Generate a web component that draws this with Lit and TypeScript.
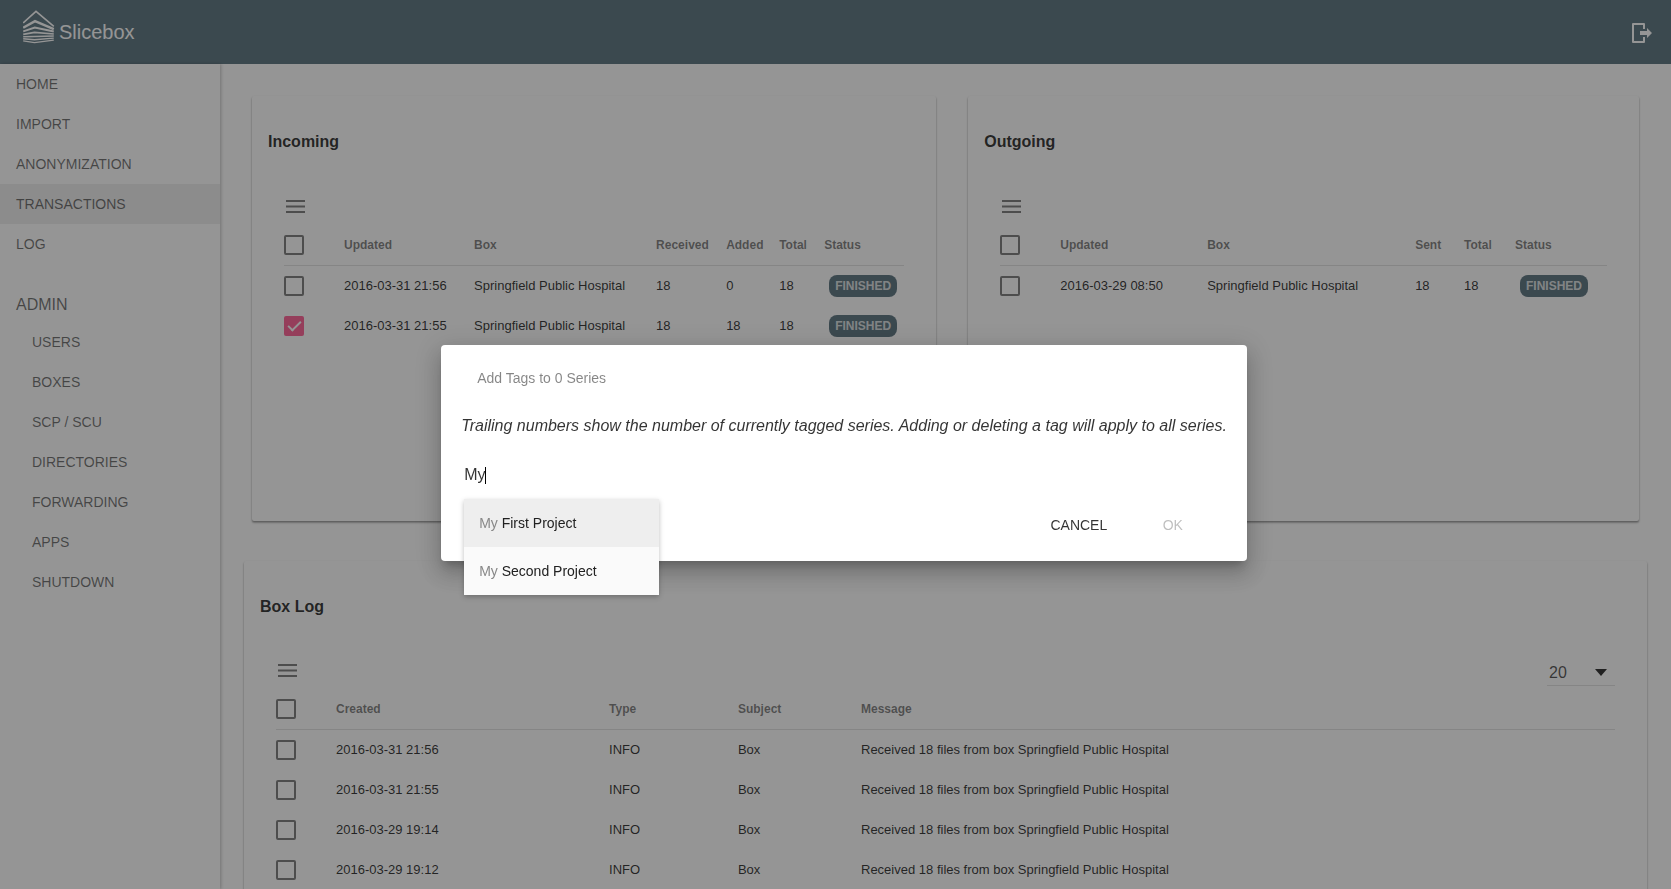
import { LitElement, html, css, svg } from "lit";
import { customElement, property } from "lit/decorators.js";
import { classMap } from "lit/directives/class-map.js";

type Cell = string;
interface Column {
  label: string;
  width?: number;
}

const menuIcon = html`<svg class="menu-icon" viewBox="0 0 19 13" aria-hidden="true">
  ${[0, 5.5, 11].map((y) => svg`<rect x="0" y=${y} width="19" height="2"></rect>`)}
</svg>`;

@customElement("data-card")
export class DataCard extends LitElement {
  @property() heading = "";
  @property({ type: Boolean }) paged = false;
  @property({ attribute: false }) columns: Column[] = [];
  @property({ attribute: false }) rows: Cell[][] = [];
  @property({ attribute: false }) selected: number[] = [];

  static styles = css`
    :host {
      display: block;
      box-sizing: border-box;
      padding: 33px 32px 0;
      background: #fff;
      border-radius: 2px;
      box-shadow: 0 2px 2px 0 rgba(0, 0, 0, 0.24), 0 1px 2px 0 rgba(0, 0, 0, 0.28);
      min-width: 0;
    }
    h2 {
      margin: 0 0 0 -16px;
      font-size: 16px;
      line-height: 26px;
      font-weight: 700;
    }
    .toolbar {
      display: flex;
      justify-content: space-between;
      align-items: center;
      height: 36px;
      margin-top: 33px;
      padding-bottom: 1px;
    }
    .toolbar.paged {
      height: 35px;
    }
    .menu {
      border: 0;
      background: none;
      padding: 0 2px;
      display: flex;
      color: rgba(0, 0, 0, 0.54);
    }
    .menu-icon {
      width: 19px;
      height: 13px;
      fill: currentColor;
    }
    .pager {
      position: relative;
      display: flex;
      width: 68px;
      border-bottom: 1px solid rgba(0, 0, 0, 0.12);
      margin-top: 4px;
    }
    .pager::after {
      content: "";
      align-self: center;
      margin: 0 8px 0 -20px;
      border: solid transparent;
      border-width: 7px 6px 0;
      border-top-color: rgba(0, 0, 0, 0.87);
      pointer-events: none;
    }
    select {
      appearance: none;
      border: 0;
      background: none;
      width: 100%;
      flex: none;
      padding: 0 2px;
      height: 26px;
      font: 16px "Liberation Sans", Arial, sans-serif;
      color: rgba(0, 0, 0, 0.73);
    }
    table {
      width: 100%;
      table-layout: fixed;
      border-collapse: separate;
      border-spacing: 0;
      font-size: 13px;
    }
    .pick-col {
      width: 60px;
    }
    th {
      height: 40px;
      padding: 0;
      text-align: left;
      font-size: 12px;
      font-weight: 700;
      color: rgba(0, 0, 0, 0.54);
      border-bottom: 1px solid rgba(0, 0, 0, 0.12);
      white-space: nowrap;
    }
    td {
      box-sizing: border-box;
      height: 40px;
      padding: 0;
      white-space: nowrap;
    }
    td.text {
      padding-bottom: 2px;
    }
    input {
      appearance: none;
      display: block;
      box-sizing: border-box;
      width: 20px;
      height: 20px;
      margin: 0;
      border: 2px solid rgba(0, 0, 0, 0.54);
      border-radius: 2px;
    }
    input:checked {
      border-color: transparent;
      background: rgba(255, 64, 129, 0.87) border-box;
    }
    input:checked::after {
      content: "";
      display: block;
      box-sizing: border-box;
      width: 7px;
      height: 13px;
      margin: 0 0 0 5px;
      border: solid #fff;
      border-width: 0 2px 2px 0;
      transform: rotate(45deg);
    }
    .badge {
      display: inline-block;
      margin-left: 5px;
      padding: 0 6px;
      border-radius: 8px;
      background: #546e7a;
      color: rgba(255, 255, 255, 0.8);
      font-size: 12px;
      line-height: 22px;
      font-weight: 700;
    }
  `;

  private cell(text: Cell) {
    return text === "FINISHED"
      ? html`<td><span class="badge">${text}</span></td>`
      : html`<td class="text">${text}</td>`;
  }

  render() {
    return html`
      <h2>${this.heading}</h2>
      <div class=${classMap({ toolbar: true, paged: this.paged })}>
        <button class="menu" aria-label="Actions">${menuIcon}</button>
        ${this.paged
          ? html`<div class="pager">
              <select aria-label="Rows per page">
                <option>20</option>
                <option>50</option>
              </select>
            </div>`
          : ""}
      </div>
      <table>
        <colgroup>
          <col class="pick-col" />
          ${this.columns.map((c) =>
            c.width ? html`<col style="width:${c.width}%" />` : html`<col />`
          )}
        </colgroup>
        <thead>
          <tr>
            <th><input type="checkbox" aria-label="Select all" /></th>
            ${this.columns.map((c) => html`<th scope="col">${c.label}</th>`)}
          </tr>
        </thead>
        <tbody>
          ${this.rows.map(
            (row, i) => html`<tr>
              <td>
                <input
                  type="checkbox"
                  aria-label="Select row ${i + 1}"
                  ?checked=${this.selected.includes(i)}
                />
              </td>
              ${row.map((c) => this.cell(c))}
            </tr>`
          )}
        </tbody>
      </table>
    `;
  }
}

@customElement("tag-dialog")
export class TagDialog extends LitElement {
  static styles = css`
    :host {
      position: fixed;
      inset: 0;
      display: flex;
      align-items: center;
      justify-content: center;
      padding: 17px 0 0 17px;
      background: rgba(33, 33, 33, 0.48);
    }
    .dialog {
      box-sizing: border-box;
      padding: 24px 20px 18px;
      background: #fff;
      border-radius: 4px;
      box-shadow: 0 7px 8px -4px rgba(0, 0, 0, 0.2), 0 13px 19px 2px rgba(0, 0, 0, 0.14),
        0 5px 24px 4px rgba(0, 0, 0, 0.12);
    }
    h2 {
      margin: 0 16px;
      font-size: 14px;
      line-height: 18px;
      font-weight: 400;
      color: rgba(0, 0, 0, 0.48);
    }
    p {
      margin: 29px 0 28px;
      font-size: 16px;
      line-height: 20px;
      font-style: italic;
      color: rgba(0, 0, 0, 0.8);
    }
    .field {
      position: relative;
      display: flex;
      align-items: center;
      height: 22px;
      margin-left: 3px;
    }
    .field input {
      field-sizing: content;
      border: 0;
      outline: 0;
      padding: 0;
      background: none;
      caret-color: transparent;
      font: 16px "Liberation Sans", Arial, sans-serif;
      color: rgba(0, 0, 0, 0.8);
    }
    .caret {
      width: 1px;
      height: 17px;
      background: #000;
    }
    ul {
      position: absolute;
      left: 0;
      top: 35px;
      width: 195px;
      margin: 0;
      padding: 0;
      list-style: none;
      background: #fafafa;
      box-shadow: 0 2px 5px rgba(0, 0, 0, 0.26);
      font-size: 14px;
      line-height: 48px;
    }
    li {
      padding: 0 15px;
      color: #212121;
    }
    li[aria-selected="true"] {
      background: #eee;
    }
    .match {
      color: #888;
    }
    .actions {
      display: flex;
      justify-content: flex-end;
      gap: 6px;
      margin: 21px 10px 0 0;
    }
    .actions button {
      min-width: 88px;
      height: 36px;
      border: 0;
      padding: 0 6px;
      background: none;
      font: 14px "Liberation Sans", Arial, sans-serif;
      color: rgba(0, 0, 0, 0.8);
    }
    .actions button:disabled {
      color: rgba(0, 0, 0, 0.26);
    }
  `;

  render() {
    return html`
      <div class="dialog" role="dialog" aria-modal="true" aria-labelledby="title">
        <h2 id="title">Add Tags to 0 Series</h2>
        <p>
          Trailing numbers show the number of currently tagged series. Adding or deleting a tag
          will apply to all series.
        </p>
        <div class="field">
          <input type="text" size="2" value="My" aria-label="Tag name" />
          <span class="caret"></span>
          <ul role="listbox" aria-label="Matching tags">
            ${["First Project", "Second Project"].map(
              (name, i) => html`<li role="option" aria-selected=${i === 0}>
                <span class="match">My</span> ${name}
              </li>`
            )}
          </ul>
        </div>
        <div class="actions">
          <button>CANCEL</button>
          <button disabled>OK</button>
        </div>
      </div>
    `;
  }
}

const incoming: Column[] = [
  { label: "Updated", width: 20.97 },
  { label: "Box", width: 29.35 },
  { label: "Received", width: 11.29 },
  { label: "Added", width: 8.55 },
  { label: "Total", width: 7.26 },
  { label: "Status" },
];

const outgoing: Column[] = [
  { label: "Updated", width: 24.22 },
  { label: "Box", width: 34.27 },
  { label: "Sent", width: 8.07 },
  { label: "Total", width: 8.4 },
  { label: "Status" },
];

const log: Column[] = [
  { label: "Created", width: 20.39 },
  { label: "Type", width: 9.63 },
  { label: "Subject", width: 9.19 },
  { label: "Message" },
];

const hospital = "Springfield Public Hospital";
const logRows = ["2016-03-31 21:56", "2016-03-31 21:55", "2016-03-29 19:14", "2016-03-29 19:12"].map(
  (time) => [time, "INFO", "Box", `Received 18 files from box ${hospital}`]
);

@customElement("app-root")
export class AppRoot extends LitElement {
  static styles = css`
    :host {
      display: flex;
      flex-direction: column;
      height: 100vh;
      overflow: hidden;
      background: #fff;
      font-family: "Liberation Sans", Arial, sans-serif;
      color: rgba(0, 0, 0, 0.87);
    }
    header {
      display: flex;
      flex: none;
      justify-content: space-between;
      align-items: center;
      height: 64px;
      padding: 0 19px 0 23px;
      box-sizing: border-box;
      background: #546e7a;
      color: #fff;
    }
    .brand {
      display: flex;
      align-items: center;
      gap: 4px;
      font-size: 20px;
      line-height: 24px;
      color: inherit;
      text-decoration: none;
    }
    .logo {
      width: 32px;
      height: 34px;
      margin-bottom: 10px;
    }
    .logout {
      display: flex;
      border: 0;
      padding: 0;
      background: none;
      color: inherit;
    }
    .logout svg {
      width: 20px;
      height: 20px;
      margin-top: 2px;
    }
    .body {
      display: flex;
      flex: 1;
      min-height: 0;
    }
    nav {
      flex: none;
      width: 220px;
      background: #fff;
      box-shadow: 1px 0 3px rgba(0, 0, 0, 0.26);
      font-size: 14px;
    }
    nav a {
      display: block;
      padding: 0 16px;
      line-height: 40px;
      color: rgba(0, 0, 0, 0.6);
      text-decoration: none;
    }
    nav a.active {
      background: rgba(0, 0, 0, 0.07);
    }
    .group {
      padding: 31px 16px 7px;
      font-size: 16px;
      line-height: 20px;
      color: rgba(0, 0, 0, 0.6);
    }
    .sub a {
      padding-left: 32px;
    }
    main {
      flex: 1;
      min-width: 0;
      overflow: hidden;
      padding: 32px 24px 0;
    }
    .pair {
      display: grid;
      grid-template-columns: 101fr 99fr;
      gap: 32px;
      margin: 0 8px 40px;
    }
    .pair data-card {
      min-height: 425px;
    }
    .log {
      min-height: 440px;
    }
  `;

  render() {
    return html`
      <header>
        <a class="brand" href="#">
          <svg class="logo" viewBox="0 0 32 34" fill="none" stroke="#fff" aria-hidden="true">
            <path d="M0.2 12.9L13 1.3L30.8 16.4" stroke-width="1.6" />
            <path d="M0.2 17.8L12 11.2L30.8 19.2" stroke-width="2.4" />
            <path d="M0.2 21.4L11.8 17.6L30.8 21.6" stroke-width="2" />
            <path d="M0.2 24.4L11.5 22.4L30.8 24" stroke-width="1.7" />
            <path d="M0.2 26.7L11.5 26.5L30.8 26" stroke-width="1.4" />
            <path d="M0.2 28.8L11.5 29.7L30.8 28.1" stroke-width="1.4" />
            <path d="M0.2 30.9L11.5 32.6L30.8 30.1" stroke-width="1.4" />
          </svg>
          <span>Slicebox</span>
        </a>
        <button class="logout" aria-label="Log out">
          <svg viewBox="0 0 20 20" aria-hidden="true">
            <path
              d="M12 6V1H1V19H12V14"
              fill="none"
              stroke="currentColor"
              stroke-width="2"
              stroke-linejoin="round"
            />
            <path d="M8 8H15V5L20 10L15 15V12H8Z" fill="currentColor" />
          </svg>
        </button>
      </header>
      <div class="body">
        <nav>
          ${["HOME", "IMPORT", "ANONYMIZATION", "TRANSACTIONS", "LOG"].map(
            (item) =>
              html`<a href="#" class=${classMap({ active: item === "TRANSACTIONS" })}>${item}</a>`
          )}
          <div class="group">ADMIN</div>
          <div class="sub">
            ${["USERS", "BOXES", "SCP / SCU", "DIRECTORIES", "FORWARDING", "APPS", "SHUTDOWN"].map(
              (item) => html`<a href="#">${item}</a>`
            )}
          </div>
        </nav>
        <main>
          <div class="pair">
            <data-card
              heading="Incoming"
              .columns=${incoming}
              .rows=${[
                ["2016-03-31 21:56", hospital, "18", "0", "18", "FINISHED"],
                ["2016-03-31 21:55", hospital, "18", "18", "18", "FINISHED"],
              ]}
              .selected=${[1]}
            ></data-card>
            <data-card
              heading="Outgoing"
              .columns=${outgoing}
              .rows=${[["2016-03-29 08:50", hospital, "18", "18", "FINISHED"]]}
            ></data-card>
          </div>
          <data-card class="log" heading="Box Log" paged .columns=${log} .rows=${logRows}></data-card>
        </main>
      </div>
      <tag-dialog></tag-dialog>
    `;
  }
}
